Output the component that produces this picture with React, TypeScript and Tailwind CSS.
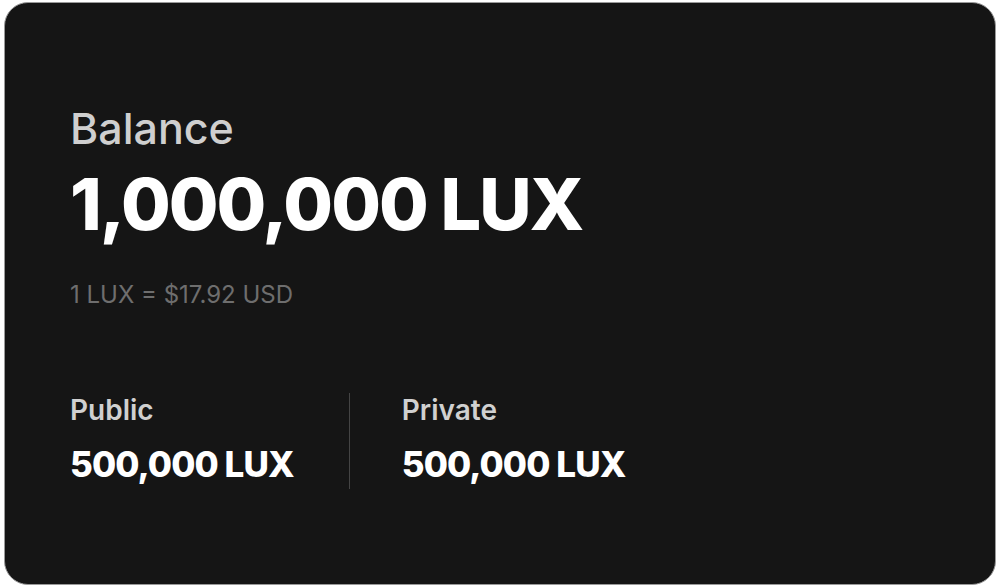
import React from "react";

export default function App() {
  return (
    <div className="w-[1000px] h-[587px] bg-white p-[2px_4px_2px_4px] flex" style={{ fontFamily: "Inter, 'Noto Sans', sans-serif" }}>
      <div className="flex-1 rounded-[24px] bg-[#151515] border border-[#9a9a9a] flex flex-col pl-[65px] pt-[99px]">
        <div className="text-[43px] leading-[52px] font-medium text-[#cfcfcf]">Balance</div>
        <div className="text-[72px] leading-[84px] font-extrabold text-white tracking-[-2px] mt-[8px]">1,000,000 LUX</div>
        <div className="text-[24px] leading-[30px] text-[#6e6e6e] mt-[34px]">1 LUX = $17.92 USD</div>
        <div className="flex mt-[83px] items-stretch">
          <div className="flex flex-col pr-[55px] pb-[4px]">
            <div className="text-[28px] leading-[34px] font-semibold text-[#d0d0d0]">Public</div>
            <div className="text-[35px] leading-[42px] font-extrabold text-white mt-[16px] tracking-[-0.9px]">500,000 LUX</div>
          </div>
          <div className="w-px bg-[#444]" />
          <div className="flex flex-col pl-[52px] pb-[4px]">
            <div className="text-[28px] leading-[34px] font-semibold text-[#d0d0d0]">Private</div>
            <div className="text-[35px] leading-[42px] font-extrabold text-white mt-[16px] tracking-[-0.9px]">500,000 LUX</div>
          </div>
        </div>
      </div>
    </div>
  );
}
